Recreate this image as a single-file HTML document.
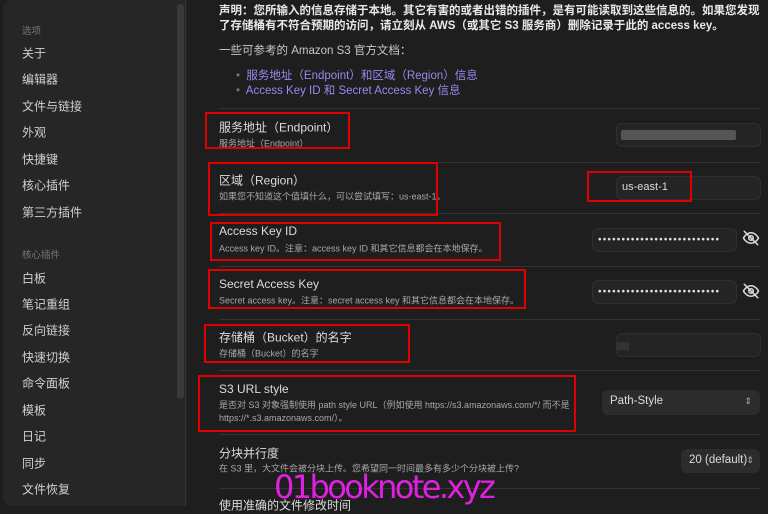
<!DOCTYPE html><html><head><meta charset="utf-8"><style>
body{margin:0;width:768px;height:506px;background:#1e1e1e;overflow:hidden;position:relative;font-family:"Liberation Sans","Noto Sans CJK SC",sans-serif;color:#dadada}
.a{position:absolute;white-space:nowrap}
#side{position:absolute;left:3px;top:0;width:182px;height:506px;background:#262626;border-radius:8px 0 0 8px;border-right:1px solid #333}
.si{position:absolute;left:19px;font-size:12px;color:#d0d0d0;transform:translateY(-50%)}
.sh{font-size:9.5px;color:#777}
.sb{position:absolute;left:174px;top:4px;width:7px;height:395px;background:#3a3a3a;border-radius:4px}
.t{font-size:12px;color:#dcdcdc;transform:translateY(-50%)}
.d{font-size:9px;color:#a8a8a8;transform:translateY(-50%)}
.sep{position:absolute;left:219px;width:541px;height:1px;background:#333}
.in{position:absolute;background:#242424;border:1px solid #2f2f2f;border-radius:6px}
.sel{position:absolute;background:#2c2c2c;border-radius:6px;font-size:11.5px;color:#ddd}
.r{position:absolute;border:2px solid #e00000;box-sizing:border-box}
.dots{font-size:10px;letter-spacing:1.2px;color:#ddd}
</style></head><body>
<div id="side"><div class="sb"></div>
<div class="si sh" style="top:30px">选项</div>
<div class="si" style="top:53px">关于</div>
<div class="si" style="top:79px">编辑器</div>
<div class="si" style="top:106px">文件与链接</div>
<div class="si" style="top:132px">外观</div>
<div class="si" style="top:159px">快捷键</div>
<div class="si" style="top:185px">核心插件</div>
<div class="si" style="top:212px">第三方插件</div>
<div class="si sh" style="top:254px">核心插件</div>
<div class="si" style="top:278px">白板</div>
<div class="si" style="top:304px">笔记重组</div>
<div class="si" style="top:330px">反向链接</div>
<div class="si" style="top:357px">快速切换</div>
<div class="si" style="top:383px">命令面板</div>
<div class="si" style="top:410px">模板</div>
<div class="si" style="top:436px">日记</div>
<div class="si" style="top:463px">同步</div>
<div class="si" style="top:489px">文件恢复</div>
</div>
<div class="a" style="left:219px;top:4px;font-size:11.5px;font-weight:bold;color:#e8e8e8;line-height:15px;white-space:normal;width:545px">声明：您所输入的信息存储于本地。其它有害的或者出错的插件，是有可能读取到这些信息的。如果您发现了存储桶有不符合预期的访问，请立刻从 AWS（或其它 S3 服务商）删除记录于此的 access key。</div>
<div class="a t" style="left:219px;top:50px;font-size:11.5px;color:#c8c8c8">一些可参考的 Amazon S3 官方文档：</div>
<div class="a t" style="left:236px;top:75px;font-size:11.5px;color:#9d87f0"><span style="color:#777">•</span>&nbsp; 服务地址（Endpoint）和区域（Region）信息</div>
<div class="a t" style="left:236px;top:90px;font-size:11.5px;color:#9d87f0"><span style="color:#777">•</span>&nbsp; Access Key ID 和 Secret Access Key 信息</div>
<div class="sep" style="top:108px"></div><div class="sep" style="top:162px"></div><div class="sep" style="top:213px"></div><div class="sep" style="top:266px"></div><div class="sep" style="top:319px"></div><div class="sep" style="top:370px"></div><div class="sep" style="top:434px"></div><div class="sep" style="top:488px"></div>
<div class="a t" style="left:219px;top:127px">服务地址（Endpoint）</div><div class="a d" style="left:219px;top:143px">服务地址（Endpoint）</div>
<div class="in" style="left:616px;top:123px;width:143px;height:22px"><div style="position:absolute;left:4px;top:6px;width:115px;height:10px;background:#555;border-radius:2px"></div></div>
<div class="a t" style="left:219px;top:180px">区域（Region）</div><div class="a d" style="left:219px;top:196px">如果您不知道这个值填什么，可以尝试填写：us-east-1。</div>
<div class="in" style="left:616px;top:176px;width:143px;height:22px"></div><div class="a t" style="left:622px;top:187px;font-size:11px">us-east-1</div>
<div class="a t" style="left:219px;top:231px">Access Key ID</div><div class="a d" style="left:219px;top:248px">Access key ID。注意：access key ID 和其它信息都会在本地保存。</div>
<div class="in" style="left:592px;top:228px;width:143px;height:22px"></div><div class="a t dots" style="left:598px;top:240px">••••••••••••••••••••••••••</div>
<div class="a t" style="left:219px;top:284px">Secret Access Key</div><div class="a d" style="left:219px;top:300px">Secret access key。注意：secret access key 和其它信息都会在本地保存。</div>
<div class="in" style="left:592px;top:280px;width:143px;height:22px"></div><div class="a t dots" style="left:598px;top:292px">••••••••••••••••••••••••••</div>
<svg class="a" style="left:742px;top:229px" width="18" height="18" viewBox="0 0 24 24" fill="none" stroke="#ddd" stroke-width="2" stroke-linecap="round"><path d="M2 12s3.5-7 10-7 10 7 10 7-3.5 7-10 7S2 12 2 12z"/><circle cx="12" cy="12" r="3"/><path d="M3 3l18 18"/></svg>
<svg class="a" style="left:742px;top:282px" width="18" height="18" viewBox="0 0 24 24" fill="none" stroke="#ddd" stroke-width="2" stroke-linecap="round"><path d="M2 12s3.5-7 10-7 10 7 10 7-3.5 7-10 7S2 12 2 12z"/><circle cx="12" cy="12" r="3"/><path d="M3 3l18 18"/></svg>
<div class="a t" style="left:219px;top:337px">存储桶（Bucket）的名字</div><div class="a d" style="left:219px;top:353px">存储桶（Bucket）的名字</div>
<div class="in" style="left:616px;top:333px;width:143px;height:22px"><div style="position:absolute;left:0;top:8px;width:12px;height:8px;background:#333"></div></div>
<div class="a t" style="left:219px;top:389px">S3 URL style</div>
<div class="a" style="left:219px;top:399px;font-size:9px;color:#a8a8a8;line-height:13px">是否对 S3 对象强制使用 path style URL（例如使用 https://s3.amazonaws.com/*/ 而不是<br>https://*.s3.amazonaws.com/）。</div>
<div class="sel" style="left:602px;top:390px;width:158px;height:25px"><span style="position:absolute;left:8px;top:5px">Path-Style</span><span style="position:absolute;right:8px;top:6px;font-size:9px;color:#aaa">⇕</span></div>
<div class="a t" style="left:219px;top:453px">分块并行度</div><div class="a d" style="left:219px;top:468px">在 S3 里，大文件会被分块上传。您希望同一时间最多有多少个分块被上传?</div>
<div class="sel" style="left:681px;top:449px;width:79px;height:24px"><span style="position:absolute;left:8px;top:5px">20 (default)</span><span style="position:absolute;right:6px;top:6px;font-size:9px;color:#aaa">⇕</span></div>
<div class="a t" style="left:219px;top:505px">使用准确的文件修改时间</div>
<div class="r" style="left:205px;top:112px;width:145px;height:37px"></div>
<div class="r" style="left:208px;top:162px;width:230px;height:54px"></div>
<div class="r" style="left:587px;top:171px;width:105px;height:31px"></div>
<div class="r" style="left:210px;top:222px;width:291px;height:39px"></div>
<div class="r" style="left:208px;top:269px;width:318px;height:40px"></div>
<div class="r" style="left:204px;top:324px;width:206px;height:39px"></div>
<div class="r" style="left:198px;top:375px;width:378px;height:57px"></div>
<div class="a" style="left:274px;top:468px;font-size:32px;color:#e020e0;font-family:'DejaVu Sans',sans-serif;letter-spacing:-2.6px">01booknote.xyz</div>
</body></html>
